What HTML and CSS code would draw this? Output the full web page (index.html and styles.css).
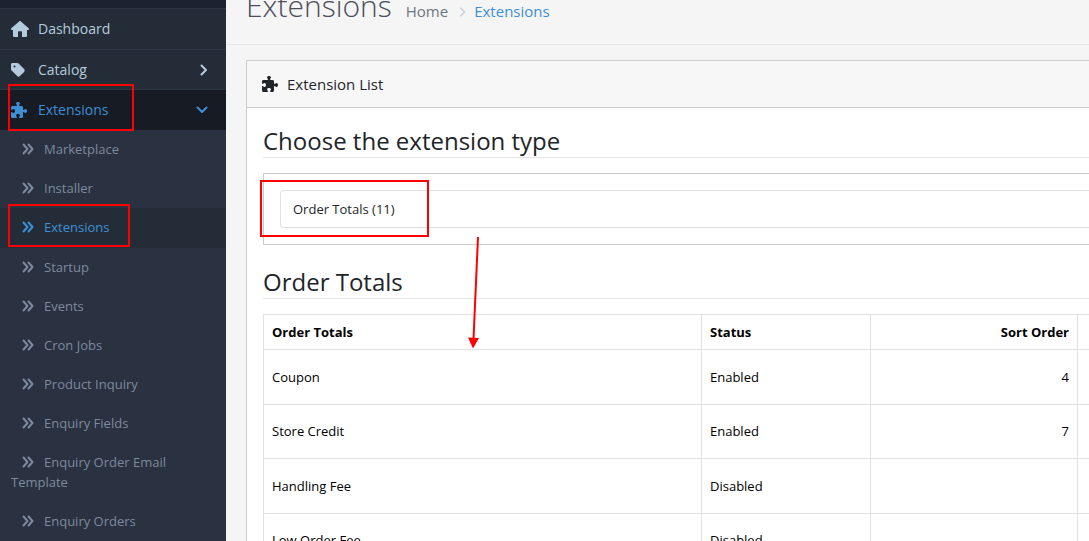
FILE: index.html
```
<!DOCTYPE html>
<html lang="en">
<head>
<meta charset="utf-8">
<title>Extensions</title>
<link rel="stylesheet" href="styles.css">
</head>
<body>
<svg class="defs" aria-hidden="true">
  <symbol id="home" viewBox="0 0 576 512"><path d="M575.800 255.500c0 18-15 32.100-32 32.100h-32l.7 160.200c0 2.700-.2 5.400-.5 8.100V472c0 22.100-17.900 40-40 40H352V360c0-18-14-32-32-32h-64c-18 0-32 14-32 32v152H104c-22 0-40-18-40-40V287.600H32c-18 0-32-14-32-32.100 0-9 3-17 10-24L266.400 8c7-7 15-8 22-8s15 2 21 7l255.400 224.500c8 7 12 15 11 24z"/></symbol>
  <symbol id="tag" viewBox="0 0 448 512"><path fill-rule="evenodd" d="M0 80v149.500c0 17 6.700 33.300 18.700 45.300l176 176c25 25 65.500 25 90.500 0l133.500-133.500c25-25 25-65.500 0-90.500l-176-176c-12-12-28.300-18.700-45.300-18.700H48C21.500 32 0 53.500 0 80zm112 32a32 32 0 1 1 0 64 32 32 0 1 1 0-64z"/></symbol>
  <symbol id="puzzle" viewBox="0 0 512 512"><path d="M192 104.800c0-9.200-5.800-17.300-13.200-22.800C167.200 73.300 160 61.300 160 48c0-26.500 28.700-48 64-48s64 21.500 64 48c0 13.300-7.200 25.300-18.800 34-7.400 5.500-13.200 13.600-13.200 22.800 0 12.800 10.400 23.200 23.200 23.200H336c26.500 0 48 21.500 48 48v56.800c0 12.800 10.400 23.200 23.200 23.200 9.200 0 17.300-5.800 22.800-13.200 8.700-11.600 20.700-18.800 34-18.800 26.500 0 48 28.700 48 64s-21.500 64-48 64c-13.300 0-25.300-7.200-34-18.800-5.500-7.400-13.600-13.200-22.800-13.200-12.800 0-23.200 10.400-23.200 23.200V464c0 26.500-21.500 48-48 48h-56.800c-12.800 0-23.200-10.400-23.200-23.200 0-9.200 5.800-17.300 13.200-22.800 11.600-8.700 18.800-20.700 18.800-34 0-26.500-28.700-48-64-48s-64 21.500-64 48c0 13.300 7.200 25.300 18.800 34 7.400 5.500 13.200 13.600 13.200 22.800 0 12.800-10.400 23.200-23.200 23.200H48c-26.500 0-48-21.500-48-48V343.200C0 330.400 10.400 320 23.200 320c9.200 0 17.300 5.800 22.800 13.200C54.700 344.800 66.700 352 80 352c26.500 0 48-28.700 48-64s-21.500-64-48-64c-13.300 0-25.300 7.200-34 18.800C40.500 250.200 32.400 256 23.200 256 10.400 256 0 245.600 0 232.800V176c0-26.500 21.500-48 48-48h120.800c12.800 0 23.200-10.400 23.200-23.200z"/></symbol>
  <symbol id="right" viewBox="0 0 8 12"><path d="M1.500 1.500 6 6 1.500 10.500" fill="none" stroke="currentColor" stroke-width="2" stroke-linecap="round" stroke-linejoin="round"/></symbol>
  <symbol id="down" viewBox="0 0 12 8"><path d="M1.500 1.500 6 6 10.500 1.500" fill="none" stroke="currentColor" stroke-width="2" stroke-linecap="round" stroke-linejoin="round"/></symbol>
  <symbol id="angles" viewBox="0 0 12 12"><path d="M1.500 1.500 5.500 6 1.500 10.500M6.500 1.500 10.500 6 6.500 10.500" fill="none" stroke="currentColor" stroke-width="2" stroke-linecap="round" stroke-linejoin="round"/></symbol>
</svg>
<div class="layout">
  <nav class="sidebar">
    <ul class="menu">
      <li><a href="#" class="menu-link"><svg class="icon-home"><use href="#home"/></svg><span>Dashboard</span></a></li>
      <li><a href="#" class="menu-link"><svg class="icon-tag"><use href="#tag"/></svg><span>Catalog</span><svg class="chevron-right"><use href="#right"/></svg></a></li>
      <li><a href="#" class="menu-link open"><svg class="icon-puzzle"><use href="#puzzle"/></svg><span>Extensions</span><svg class="chevron-down"><use href="#down"/></svg></a>
        <ul class="submenu">
          <li><a href="#"><svg><use href="#angles"/></svg>Marketplace</a></li>
          <li><a href="#"><svg><use href="#angles"/></svg>Installer</a></li>
          <li><a href="#" class="active"><svg><use href="#angles"/></svg>Extensions</a></li>
          <li><a href="#"><svg><use href="#angles"/></svg>Startup</a></li>
          <li><a href="#"><svg><use href="#angles"/></svg>Events</a></li>
          <li><a href="#"><svg><use href="#angles"/></svg>Cron Jobs</a></li>
          <li><a href="#"><svg><use href="#angles"/></svg>Product Inquiry</a></li>
          <li><a href="#"><svg><use href="#angles"/></svg>Enquiry Fields</a></li>
          <li><a href="#"><svg><use href="#angles"/></svg>Enquiry Order Email Template</a></li>
          <li><a href="#"><svg><use href="#angles"/></svg>Enquiry Orders</a></li>
        </ul>
      </li>
    </ul>
  </nav>
  <main class="content">
    <header class="page-header">
      <h1>Extensions</h1>
      <nav class="breadcrumb"><a href="#">Home</a><svg><use href="#right"/></svg><a href="#" class="current">Extensions</a></nav>
    </header>
    <section class="card">
      <div class="card-header"><svg class="icon-puzzle"><use href="#puzzle"/></svg><span>Extension List</span></div>
      <div class="card-body">
        <h2><label for="type">Choose the extension type</label></h2>
        <div class="filter"><select id="type"><option>Order Totals (11)</option></select></div>
        <h2>Order Totals</h2>
        <table>
          <colgroup><col class="col-name"><col class="col-status"><col class="col-sort"><col></colgroup>
          <thead><tr><th>Order Totals</th><th>Status</th><th class="number">Sort Order</th><th></th></tr></thead>
          <tbody>
            <tr><td>Coupon</td><td>Enabled</td><td class="number">4</td><td></td></tr>
            <tr><td>Store Credit</td><td>Enabled</td><td class="number">7</td><td></td></tr>
            <tr><td>Handling Fee</td><td>Disabled</td><td></td><td></td></tr>
            <tr><td>Low Order Fee</td><td>Disabled</td><td></td><td></td></tr>
          </tbody>
        </table>
      </div>
    </section>
  </main>
</div>
<div class="mark mark-menu"></div>
<div class="mark mark-submenu"></div>
<div class="mark mark-select"></div>
<svg class="arrow" viewBox="0 0 14 112"><path d="M10 0 5.500 102" fill="none" stroke="red" stroke-width="2"/><path d="M0 100.500 11 101 5 111.500z" fill="red"/></svg>
</body>
</html>
```
FILE: styles.css
```
* { box-sizing: border-box; }
body { margin: 0; height: 100vh; overflow: hidden; position: relative; font: 13px/20px "Open Sans", sans-serif; color: #212529; background: #f5f5f5; }
a { text-decoration: none; color: inherit; }
ul { list-style: none; margin: 0; padding: 0; }
svg { fill: currentColor; flex: none; }
.defs { position: absolute; width: 0; height: 0; }
.layout { display: flex; height: 100vh; overflow: hidden; }

.sidebar { flex: none; width: 226px; padding-top: 8px; background: #1c2230; }
.menu > li { border-top: 1px solid #2b3843; }
.menu > li:first-child .menu-link { height: 40px; }
.menu-link { display: flex; align-items: center; height: 39px; padding: 0 18px 0 11px; font-size: 14px; color: #b3cbdd; background: #242d37; }
.menu-link span { flex: 1; }
.menu-link.open { height: 40px; color: #3d8fd6; background: #171b23; }
.icon-home { width: 18px; height: 16px; margin-right: 9px; }
.icon-tag { width: 14px; height: 16px; margin-right: 13px; }
.icon-puzzle { width: 16px; height: 16px; margin-right: 11px; }
.chevron-right { width: 8px; height: 12px; }
.chevron-down { width: 12px; height: 8px; }
.submenu { background: #2a3140; color: #7d8a9d; height: 100vh; }
.submenu a { display: block; padding: 9px 20px 10px 11px; }
.submenu svg { width: 12px; height: 12px; margin: 0 10px 0 11px; vertical-align: -1px; }
.submenu a.active { color: #3d8fd6; background: #242d37; padding-bottom: 11px; }

.content { flex: 1; min-width: 0; }
.page-header { display: flex; align-items: center; height: 45px; padding: 0 20px; border-bottom: 1px solid #e7e7e7; }
h1 { margin: -32px 14px 0 0; font-size: 30px; line-height: 40px; font-weight: 300; color: #4c4d5a; }
.breadcrumb { display: flex; align-items: center; margin-top: -22px; font-size: 15px; color: #6c757d; }
.breadcrumb svg { width: 8px; height: 10px; margin: 2px 7px 0 11px; color: #c9d0d8; }
.breadcrumb .current { color: #3d8fd6; }
.card { margin: 15px 0 0 20px; border: 1px solid #ccc; border-right: 0; background: #fff; }
.card-header { display: flex; align-items: center; height: 47px; padding: 0 15px; font-size: 15px; background: #f7f7f7; border-bottom: 1px solid #ccc; }
.card-header .icon-puzzle { margin-right: 9px; }
.card-body { padding: 16px 0 0 16px; }
h2 { margin: 0 0 15px; height: 34px; border-bottom: 1px solid #e5e5e5; font-size: 24px; line-height: 34px; font-weight: 400; }
.filter { margin-bottom: 20px; padding: 16px 0 16px 16px; border: 1px solid #ccc; border-right: 0; }
select { display: block; appearance: none; width: 100%; height: 38px; padding: 0 12px; border: 1px solid #dee2e6; border-right: 0; border-radius: 4px 0 0 4px; background: #fff; color: #212529; font: inherit; }
table { width: 100%; table-layout: fixed; border-collapse: collapse; color: #000; }
.col-name { width: 438px; }
.col-status { width: 169px; }
.col-sort { width: 207px; }
th, td { padding: 7px 8px; border: 1px solid #dee2e6; border-right-width: 0; text-align: left; }
td { padding: 17px 8px; }
tr:nth-child(even) td { padding: 16px 8px 17px; }
th { font-weight: 700; }
.number { text-align: right; }

.mark { position: absolute; border: 2px solid red; }
.mark-menu { left: 8px; top: 84px; width: 126px; height: 47px; }
.mark-submenu { left: 8px; top: 204px; width: 122px; height: 43px; }
.mark-select { left: 260px; top: 180px; width: 169px; height: 57px; }
.arrow { position: absolute; left: 468px; top: 237px; width: 14px; height: 112px; }
```
